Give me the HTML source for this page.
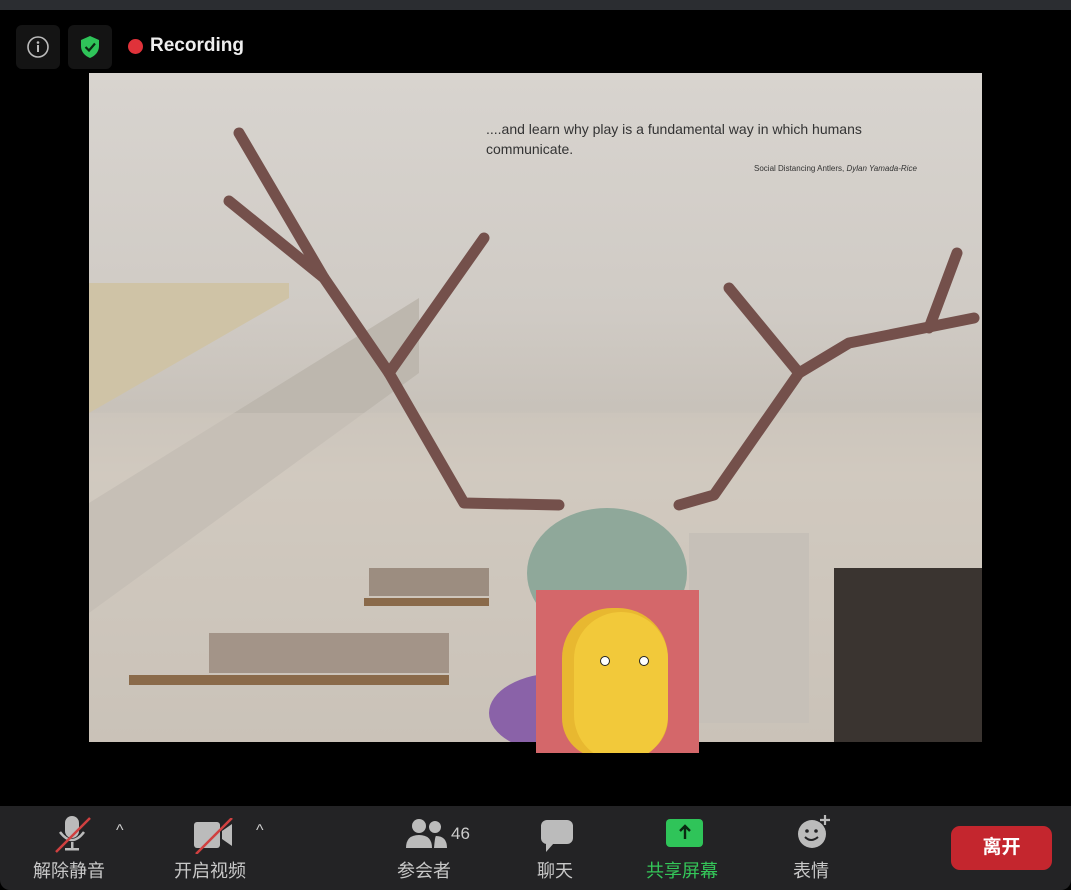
<!DOCTYPE html><html><head><meta charset="utf-8"><style>
body{margin:0;width:1071px;height:890px;background:#000;position:relative;overflow:hidden;font-family:"Liberation Sans","Noto Sans CJK SC",sans-serif}
.a{position:absolute}
.lbl{position:absolute;color:#c8c8c8;font-size:18px;top:857px;white-space:nowrap}
</style></head><body>
<div class="a" style="left:0;top:0;width:1071px;height:10px;background:#2b2d31"></div>
<div class="a" style="left:16px;top:25px;width:44px;height:44px;background:#141414;border-radius:6px"></div>
<svg class="a" style="left:26px;top:35px" width="24" height="24"><circle cx="12" cy="12" r="10" fill="none" stroke="#bbb" stroke-width="1.6"/><circle cx="12" cy="7.5" r="1.3" fill="#bbb"/><rect x="11" y="10" width="2" height="7" fill="#bbb"/></svg>
<div class="a" style="left:68px;top:25px;width:44px;height:44px;background:#141414;border-radius:6px"></div>
<svg class="a" style="left:79px;top:35px" width="22" height="24"><path d="M11 1 L20 5 V11 C20 17 16 21 11 23 C6 21 2 17 2 11 V5 Z" fill="#2fc459"/><path d="M6.5 12 L10 15.5 L16 8.5" fill="none" stroke="#0a2a12" stroke-width="2.2"/></svg>
<div class="a" style="left:128px;top:39px;width:15px;height:15px;border-radius:50%;background:#e0323a"></div>
<div class="a" style="left:150px;top:35px;color:#eee;font-weight:bold;font-size:19px">Recording</div>

<div class="a" style="left:89px;top:73px;width:893px;height:669px;background:linear-gradient(180deg,#d8d4cf 0%,#d0cbc5 35%,#c8c2ba 50%,#d2cbc1 60%,#c4bdb3 100%);overflow:hidden">
<svg width="893" height="669" class="a" style="left:0;top:0">
<polygon points="0,430 0,540 330,300 330,225" fill="#bdb7ae"/>
<polygon points="0,210 0,340 200,225 200,210" fill="#cfc3a6"/>
<rect x="0" y="340" width="893" height="329" fill="#cfc8be" opacity=".5"/>
<rect x="600" y="460" width="120" height="190" fill="#c6c0b8"/>
<rect x="745" y="495" width="148" height="174" fill="#3a3430"/>
<rect x="275" y="525" width="125" height="8" fill="#8a6a4a"/>
<rect x="40" y="602" width="320" height="10" fill="#8a6a4a"/>
<rect x="120" y="560" width="240" height="40" fill="#7a6455" opacity=".5"/>
<rect x="280" y="495" width="120" height="28" fill="#6a5444" opacity=".5"/>
<ellipse cx="518" cy="500" rx="80" ry="65" fill="#8fa89a"/>
<ellipse cx="470" cy="640" rx="70" ry="40" fill="#8a62a8"/>
<g fill="none" stroke="#74504b" stroke-width="11" stroke-linecap="round" stroke-linejoin="round">
<polyline points="470,432 375,430 300,300 235,205 140,128"/>
<polyline points="235,205 150,60"/>
<polyline points="300,300 395,165"/>
<polyline points="590,432 625,422 710,300 760,270 885,245"/>
<polyline points="710,300 640,215"/>
<polyline points="840,255 868,180"/>
</g>
</svg>
<div class="a" style="left:397px;top:46px;color:#333;font-size:14px;line-height:20px;width:420px">....and learn why play is a fundamental way in which humans communicate.</div>
<div class="a" style="left:665px;top:91px;color:#333;font-size:8px">Social Distancing Antlers, <i>Dylan Yamada-Rice</i></div>
</div>

<div class="a" style="left:536px;top:590px;width:163px;height:163px;background:#d4676a;overflow:hidden">
<div class="a" style="left:26px;top:18px;width:106px;height:150px;border-radius:50px 50px 40px 40px;background:#e8b830"></div>
<div class="a" style="left:38px;top:22px;width:94px;height:150px;border-radius:48px;background:#f2c93a"></div>
<div class="a" style="left:64px;top:66px;width:8px;height:8px;border-radius:50%;background:#fff;border:1px solid #222"></div>
<div class="a" style="left:103px;top:66px;width:8px;height:8px;border-radius:50%;background:#fff;border:1px solid #222"></div>
</div>

<div class="a" style="left:0;top:806px;width:1071px;height:84px;background:#232325;border-radius:0 0 10px 10px"></div>
<svg class="a" style="left:52px;top:814px" width="42" height="42"><rect x="13" y="2" width="14" height="22" rx="7" fill="#bbb"/><path d="M8 18 Q20 34 32 18" fill="none" stroke="#bbb" stroke-width="2.5"/><rect x="19" y="28" width="2.5" height="7" fill="#bbb"/><rect x="13" y="34" width="14" height="2.5" fill="#bbb"/><line x1="4" y1="38" x2="38" y2="4" stroke="#d04040" stroke-width="2.5"/></svg>
<div class="a" style="left:116px;top:822px;color:#ccc;font-size:16px">^</div>
<div class="lbl" style="left:33px">解除静音</div>
<svg class="a" style="left:192px;top:818px" width="44" height="36"><rect x="2" y="4" width="26" height="26" rx="3" fill="#bbb"/><path d="M30 13 L40 6 V28 L30 21Z" fill="#bbb"/><line x1="4" y1="36" x2="40" y2="0" stroke="#d04040" stroke-width="2.5"/></svg>
<div class="a" style="left:256px;top:822px;color:#ccc;font-size:16px">^</div>
<div class="lbl" style="left:174px">开启视频</div>
<svg class="a" style="left:405px;top:818px" width="42" height="32"><circle cx="14" cy="8" r="7" fill="#bbb"/><path d="M1 30 Q1 17 14 17 Q27 17 27 30Z" fill="#bbb"/><circle cx="30" cy="9" r="6" fill="#bbb"/><path d="M29 30 Q30 18 31 18 Q42 18 42 30Z" fill="#bbb"/></svg>
<div class="a" style="left:451px;top:824px;color:#ccc;font-size:17px">46</div>
<div class="lbl" style="left:397px">参会者</div>
<svg class="a" style="left:540px;top:819px" width="34" height="34"><rect x="1" y="1" width="32" height="24" rx="6" fill="#bbb"/><path d="M6 24 L6 33 L14 24Z" fill="#bbb"/></svg>
<div class="lbl" style="left:537px">聊天</div>
<div class="a" style="left:666px;top:819px;width:37px;height:28px;background:#2fc459;border-radius:4px"></div>
<svg class="a" style="left:676px;top:823px" width="18" height="20"><path d="M9 3 L9 16 M4 8 L9 3 L14 8" stroke="#0a2a12" stroke-width="2.4" fill="none"/></svg>
<div class="lbl" style="left:646px;color:#34c759">共享屏幕</div>
<svg class="a" style="left:795px;top:814px" width="38" height="38"><circle cx="17" cy="20" r="14" fill="#bbb"/><circle cx="12" cy="17" r="1.8" fill="#232325"/><circle cx="21" cy="17" r="1.8" fill="#232325"/><path d="M10 23 Q16 29 23 23" stroke="#232325" stroke-width="2" fill="none"/><path d="M30 1 V11 M25 6 H35" stroke="#bbb" stroke-width="2.2"/></svg>
<div class="lbl" style="left:793px">表情</div>
<div class="a" style="left:951px;top:826px;width:101px;height:44px;background:#c4262e;border-radius:9px;color:#fff;font-size:19px;font-weight:bold;text-align:center;line-height:44px">离开</div>
</body></html>
